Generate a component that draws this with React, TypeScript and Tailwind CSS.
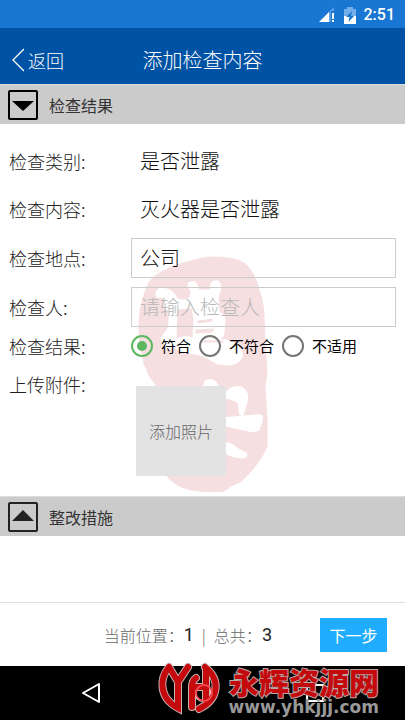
import { useState } from "react";

const results = ["符合", "不符合", "不适用"];

const rowLabel = "w-[131px] shrink-0 pl-[9px] text-lg font-light text-[#222]";
const textBox =
	"h-10 min-w-0 flex-1 border border-[#ccc] bg-transparent px-2 text-xl font-light text-[#111] outline-none placeholder:text-[#b8b8b8]";

const StatusBar = () => (
	<div className="flex h-7 items-center justify-end bg-[#1976d2] pr-[10px] pt-[2px] text-white">
		<svg className="mr-2 h-4 w-[17px]" viewBox="0 0 17 16">
			<path d="M15 0v4h-3v11h-2V5z" fill="#5b9ee3" />
			<path d="M0 15 10 5v10z" fill="#fff" />
			<path d="M13 6h2v6h-2zM13 13h2v2h-2z" fill="#fff" />
		</svg>
		<svg className="mr-2 h-[17px] w-3" viewBox="0 0 12 17">
			<path d="M3 0h6v2h3v8H0V2h3z" fill="#73aee8" />
			<path d="M0 9h12v8H0z" fill="#fff" />
			<path d="M8 4 2 10h3.500l-1 5L10 9H7z" fill="#1976d2" />
		</svg>
		<span className="font-['Roboto',sans-serif] text-base font-medium">2:51</span>
	</div>
);

const SectionBar = ({ title, open }: { title: string; open: boolean }) => (
	<button
		type="button"
		className="flex h-10 w-full items-center gap-[11px] border-t border-[#ddd] bg-[#cbcbcb] pl-2 text-base text-[#333]"
	>
		<svg className="size-[30px]" viewBox="0 0 30 30" fill={open ? "#000" : "#222"}>
			<rect
				x="1"
				y="1"
				width="28"
				height="28"
				rx="1"
				fill="none"
				stroke={open ? "#000" : "#222"}
				strokeWidth="2"
			/>
			<path d={open ? "M4 11h22L15 21z" : "M4 19h22L15 8z"} />
		</svg>
		{title}
	</button>
);

const Seal = () => (
	<svg
		className="pointer-events-none absolute bottom-1 left-1/2 h-[236px] w-[130px] -translate-x-1/2"
		viewBox="137.500 256.500 130 236"
		aria-hidden="true"
	>
		<path
			fill="#f6dfe0"
			d="M187 262C196 259 204 257 214 257c9 0 17 1 23 3 6 2 10 5 13 10 4 5 7 12 9 20 3 9 5 17 5 27l1 24c0 12 2 22 2 32l-2 14 2 33v27l-5 10-7 10-7 8-8 8-10 4c-3 4-8 6-13 7l-27-3c-11-3-17-7-22-12l-8-10-5-84c-4-5-8-9-9-15-3-5-4-8-4-13-3-8-4-16-4-24 0-9 0-18 2-26 2-9 4-16 8-24 4-6 9-9 15-12 8-5 16-7 24-9z"
		/>
		<g fill="#fff">
			<path d="M155 294c1-6 6-7 11-5 5 1 9 5 11 10 4 2 8 1 12-1l1-7c-4-3-4-9 0-9 5-2 8 2 8 8h12c-1-5 0-8 4-9 5-1 7 3 7 7-1 4-2 6-3 10l1 14c4 2 6 5 6 9l-1 11c0 4-2 7-5 8 8-1 13 1 17 6 5 3 7 6 6 12-3 5-7 7-12 8l-13-1-14-8-23-5-8-4c-3 5-6 3-7-1-2-3-5-5-5-9 4-5 7-8 8-12v-14c-2-3-4-2-5-3-1-4 2-6 1-8l-4-3c-3 1-5-1-5-4z" />
			<path d="M203 384c1-6 11-6 14 0l3 8h6c4-6 14-8 19-2 4 5 3 10 1 16l-3 10c-3 1-5-1-5-6l-1-7-11-4h-6v19l36-3c7-1 7 2 6 7l-3 9-6 2-33-7v18c7-3 12 0 18 5l8 4c2 3 1 5-3 6-10 0-20-4-27-12l-13-4z" />
		</g>
		<g fill="#f6dfe0">
			<path d="M177 310l14-1 2 10-1 19-7-2-9 3z" />
			<path d="M197 321l15-2v3l-15 2zM195 330l19-1-2 4-17 1z" />
			<path d="M203 341h20v2h-20z" />
		</g>
	</svg>
);

const monogram =
	"M13 7C3 19 3 38 22 48V22L13 7M22 22 32 7M36 47V27c0-5 1-7 4-9M36 27h14M49 7C65 20 63 39 43 49M50 9v31";

const SiteMark = () => (
	<div className="pointer-events-none absolute bottom-0 right-[26px] flex items-start gap-[3px]">
		<svg className="h-[60px] w-[70px]" viewBox="0 0 70 60" fill="none">
			<path d={monogram} stroke="#c9b3b3" strokeWidth="8" strokeLinecap="round" />
			<path d={monogram} stroke="#c40a0d" strokeWidth="6" strokeLinecap="round" />
			<circle cx="48" cy="33" r="8" stroke="#f34b4e" strokeWidth="2" />
		</svg>
		<div className="flex flex-col items-end pt-[3px]">
			<span className="text-[30px] font-black leading-9 text-[#c40a0d] [-webkit-text-stroke:2px_#b9a6a6] [paint-order:stroke_fill]">
				永辉资源网
			</span>
			<span className="font-['DejaVu_Sans',sans-serif] text-[17px] font-bold leading-4 text-[#999]">
				www.yhkjjj.com
			</span>
		</div>
	</div>
);

const App = () => {
	const [result, setResult] = useState("符合");

	return (
		<div className="flex min-h-screen flex-col bg-white font-['Noto_Sans_CJK_SC',sans-serif]">
			<StatusBar />

			<header className="grid h-14 grid-cols-[1fr_auto_1fr] items-center bg-[#0052a4] pt-2 text-white">
				<button type="button" className="flex items-center gap-1 pl-3 text-lg font-light">
					<svg className="h-6 w-3" viewBox="0 0 12 24" fill="none" stroke="#fff">
						<path d="M12 1 1 12l11 11" strokeWidth="1.300" />
					</svg>
					返回
				</button>
				<h1 className="text-xl font-light">添加检查内容</h1>
			</header>

			<SectionBar title="检查结果" open />

			<main className="relative pb-5 pt-[13px]">
				<Seal />
				<div className="relative flex flex-col">
					<div className="flex h-12 items-center">
						<span className={rowLabel}>检查类别:</span>
						<span className="pl-[9px] text-xl font-light text-[#111]">是否泄露</span>
					</div>
					<div className="flex h-12 items-center">
						<span className={rowLabel}>检查内容:</span>
						<span className="pl-[9px] text-xl font-light text-[#111]">灭火器是否泄露</span>
					</div>
					<div className="flex h-[49px] items-center pr-[9px]">
						<label htmlFor="place" className={rowLabel}>
							检查地点:
						</label>
						<input id="place" className={textBox} defaultValue="公司" />
					</div>
					<div className="flex h-[49px] items-center pr-[9px]">
						<label htmlFor="inspector" className={rowLabel}>
							检查人:
						</label>
						<input id="inspector" className={textBox} placeholder="请输入检查人" />
					</div>
					<div className="flex h-[30px] items-center" role="radiogroup" aria-labelledby="result">
						<span id="result" className={rowLabel}>
							检查结果:
						</span>
						<div className="flex gap-2">
							{results.map((name) => (
								<label key={name} className="flex items-center gap-2 text-[15px] text-black">
									<input
										type="radio"
										name="result"
										checked={result === name}
										onChange={() => setResult(name)}
										className="size-[22px] appearance-none rounded-full border-2 border-[#757575] bg-clip-content p-1 checked:border-[#5cb860] checked:bg-[#5cb860]"
									/>
									{name}
								</label>
							))}
						</div>
					</div>
					<div className="flex pt-[9px]">
						<span className={rowLabel}>上传附件:</span>
						<button
							type="button"
							className="ml-[5px] mt-4 size-[90px] bg-[#e3e3e3] text-base font-light text-[#666]"
						>
							添加照片
						</button>
					</div>
				</div>
			</main>

			<SectionBar title="整改措施" open={false} />

			<footer className="mt-auto flex h-16 items-center justify-end border-t border-[#ddd] pr-[18px]">
				<p className="mr-12 flex items-center text-base font-light text-[#666]">
					当前位置：
					<span className="font-['Roboto',sans-serif] text-lg font-normal text-[#222]">1</span>
					<span className="mx-2">|</span>
					总共：
					<span className="font-['Roboto',sans-serif] text-lg font-normal text-[#222]">3</span>
				</p>
				<button type="button" className="h-[34px] w-[67px] bg-[#20adff] text-base text-white">
					下一步
				</button>
			</footer>

			<nav className="relative flex h-[54px] items-center justify-center gap-[92px] bg-black">
				<button type="button" aria-label="返回">
					<svg className="size-5" viewBox="0 0 20 20" fill="none" stroke="#fff" strokeWidth="2">
						<path d="M18 1v18L2 10z" strokeLinejoin="round" />
					</svg>
				</button>
				<button type="button" aria-label="主页">
					<svg className="size-5" viewBox="0 0 20 20" fill="none" stroke="#fff" strokeWidth="2">
						<circle cx="10" cy="10" r="8" />
					</svg>
				</button>
				<button type="button" aria-label="最近任务">
					<svg className="size-5" viewBox="0 0 20 20" fill="none" stroke="#fff" strokeWidth="2">
						<rect x="2" y="2" width="16" height="16" />
					</svg>
				</button>
				<SiteMark />
			</nav>
		</div>
	);
};

export default App;
